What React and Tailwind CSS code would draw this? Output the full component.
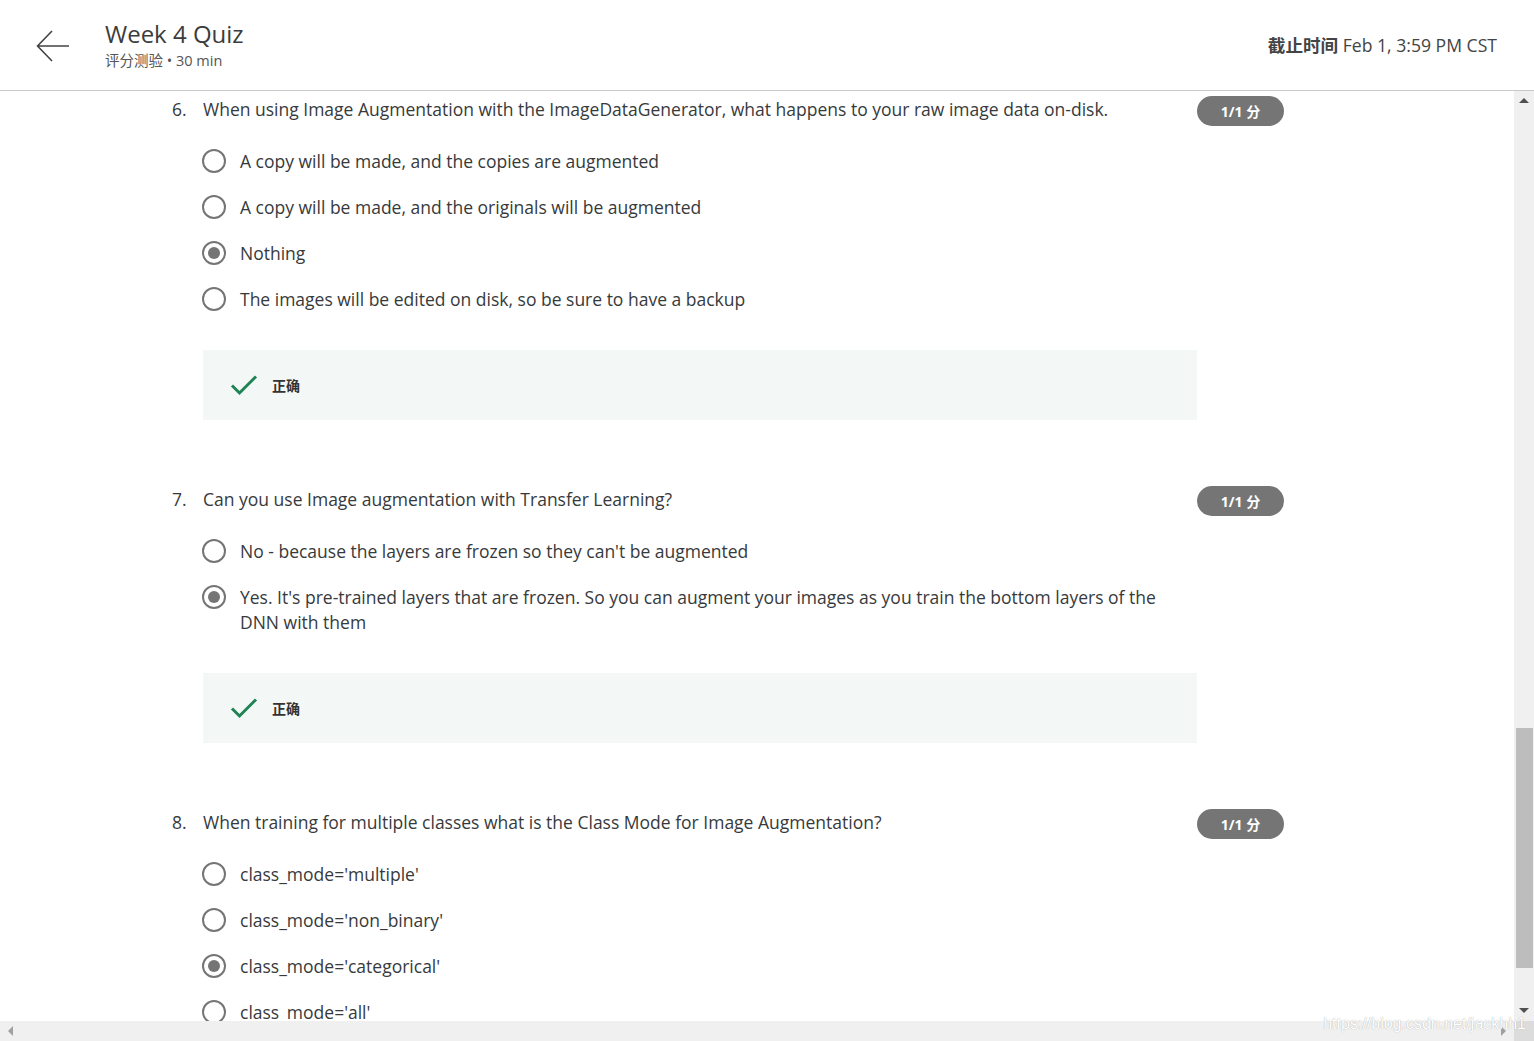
import React from "react";

const questions = [
  {
    n: "6.",
    text: "When using Image Augmentation with the ImageDataGenerator, what happens to your raw image data on-disk.",
    options: [
      "A copy will be made, and the copies are augmented",
      "A copy will be made, and the originals will be augmented",
      "Nothing",
      "The images will be edited on disk, so be sure to have a backup",
    ],
    picked: 2,
    feedback: true,
  },
  {
    n: "7.",
    text: "Can you use Image augmentation with Transfer Learning?",
    options: [
      "No - because the layers are frozen so they can't be augmented",
      "Yes. It's pre-trained layers that are frozen. So you can augment your images as you train the bottom layers of the DNN with them",
    ],
    picked: 1,
    feedback: true,
  },
  {
    n: "8.",
    text: "When training for multiple classes what is the Class Mode for Image Augmentation?",
    options: [
      "class_mode='multiple'",
      "class_mode='non_binary'",
      "class_mode='categorical'",
      "class_mode='all'",
    ],
    picked: 2,
    feedback: false,
  },
];

function Radio({ on }) {
  return (
    <div className="h-[25px] flex items-center shrink-0">
      <div className="w-[24px] h-[24px] rounded-full border-2 border-[#757575] flex items-center justify-center">
        {on && <div className="w-[12px] h-[12px] rounded-full bg-[#757575]" />}
      </div>
    </div>
  );
}

function Question({ q }) {
  return (
    <div className="mb-[66px]">
      <div className="flex items-start">
        <div className="w-[31px] shrink-0 text-[17.5px] leading-[26px]">{q.n}</div>
        <div className="flex-1 text-[17.5px] leading-[26px]">{q.text}</div>
        <div className="w-[87px] h-[30px] rounded-full bg-[#757575] text-white text-[14px] font-bold flex items-center justify-center shrink-0">
          1/1 分
        </div>
      </div>
      <div className="ml-[30px] mr-[87px] mt-[12px]">
        {q.options.map((o, i) => (
          <div key={i} className="flex items-start py-[10.5px] gap-[14px]">
            <Radio on={i === q.picked} />
            <div className="text-[17.5px] leading-[25px] pr-[30px]">{o}</div>
          </div>
        ))}
        {q.feedback && (
          <div className="mt-[28px] ml-[1px] h-[70px] bg-[#f3f8f6] flex items-center pl-[27px] gap-[14px]">
            <svg width="28" height="22" viewBox="0 0 28 22" fill="none">
              <path d="M2 11.5 L9.5 19 L26 2.5" stroke="#1f8354" strokeWidth="3" />
            </svg>
            <span className="text-[14px] font-semibold text-[#333]">正确</span>
          </div>
        )}
      </div>
    </div>
  );
}

export default function App() {
  return (
    <div className="w-[1534px] h-[1041px] overflow-hidden bg-white text-[#373a3c] flex flex-col font-['Open_Sans','Noto_Sans_CJK_SC',sans-serif]">
      <header className="h-[91px] shrink-0 border-b border-[#c8c8c8] flex items-center pl-[36px] pr-[37px]">
        <svg width="34" height="34" viewBox="0 0 34 34" fill="none" className="mr-[35px] mt-[1px]">
          <path d="M33 17 H2 M16 2 L1.5 17 L16 32" stroke="#444" strokeWidth="1.6" />
        </svg>
        <div className="flex flex-col">
          <div className="text-[24px] leading-[30px] text-[#3c3c3c]">Week 4 Quiz</div>
          <div className="text-[14.5px] leading-[20px] text-[#555] mt-[2px]">评分测验 • 30 min</div>
        </div>
        <div className="ml-auto text-[17.6px] text-[#444]">
          <span className="font-bold">截止时间</span> Feb 1, 3:59 PM CST
        </div>
      </header>
      <div className="flex-1 flex min-h-0">
        <main className="flex-1 overflow-hidden pl-[172px] pr-[230px] pt-[5px]">
          {questions.map((q) => (
            <Question key={q.n} q={q} />
          ))}
        </main>
        <div className="w-[20px] bg-[#f0f0f0] flex flex-col items-center">
          <div className="mt-[7px] w-0 h-0 border-l-[5px] border-r-[5px] border-b-[5px] border-l-transparent border-r-transparent border-b-[#505050]" />
          <div className="mt-[625px] w-[17px] h-[240px] bg-[#bdbdbd]" />
          <div className="mt-auto mb-[8px] w-0 h-0 border-l-[5px] border-r-[5px] border-t-[5px] border-l-transparent border-r-transparent border-t-[#505050]" />
        </div>
      </div>
      <div className="h-[20px] shrink-0 flex bg-[#f0f0f0]">
        <div className="flex-1 flex items-center px-[8px] relative">
          <div className="w-0 h-0 border-t-[5px] border-b-[5px] border-r-[5px] border-t-transparent border-b-transparent border-r-[#a0a0a0]" />
          <div className="ml-auto w-0 h-0 border-t-[5px] border-b-[5px] border-l-[5px] border-t-transparent border-b-transparent border-l-[#a0a0a0]" />
          <div className="absolute right-[-12px] top-[-9px] text-[16px] text-white [text-shadow:0_0_1px_#9a9a9a] font-['Liberation_Sans',sans-serif]">
            https://blog.csdn.net/jackhh1
          </div>
        </div>
        <div className="w-[20px] bg-[#dcdcdc]" />
      </div>
    </div>
  );
}
